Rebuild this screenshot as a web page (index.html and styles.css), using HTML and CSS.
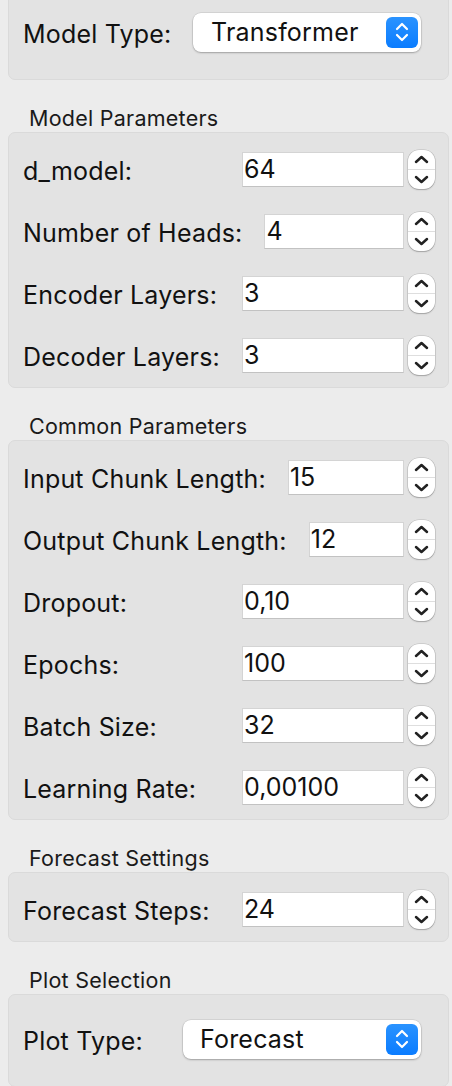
FILE: index.html
```html
<!DOCTYPE html>
<html>
<head>
<meta charset="utf-8">
<link rel="stylesheet" href="styles.css">
</head>
<body>
<div class="panel">
  <div class="group group-combo group-first">
    <div class="row">
      <span class="label label-model">Model Type:</span>
      <div class="combo"><span class="combo-text combo-text-model">Transformer</span><span class="combo-btn"><svg width="16" height="22" viewBox="0 0 16 22"><path d="M3 8 L8 3 L13 8 M3 14 L8 19 L13 14" fill="none" stroke="#fff" stroke-width="2.2" stroke-linecap="round" stroke-linejoin="round"/></svg></span></div>
    </div>
  </div>

  <div class="title">Model Parameters</div>
  <div class="group">
    <div class="row"><span class="label">d_model:</span><div class="field">64</div><div class="spin"><svg class="chev" width="27" height="39" viewBox="0 0 27 39"><path d="M8 12 L13.5 7 L19 12 M8 27 L13.5 32 L19 27" fill="none" stroke="#222" stroke-width="2.5" stroke-linecap="round" stroke-linejoin="round"/><line x1="0" y1="19.5" x2="27" y2="19.5" stroke="#dedede" stroke-width="1"/></svg></div></div>
    <div class="row"><span class="label">Number of Heads:</span><div class="field">4</div><div class="spin"><svg class="chev" width="27" height="39" viewBox="0 0 27 39"><path d="M8 12 L13.5 7 L19 12 M8 27 L13.5 32 L19 27" fill="none" stroke="#222" stroke-width="2.5" stroke-linecap="round" stroke-linejoin="round"/><line x1="0" y1="19.5" x2="27" y2="19.5" stroke="#dedede" stroke-width="1"/></svg></div></div>
    <div class="row"><span class="label">Encoder Layers:</span><div class="field">3</div><div class="spin"><svg class="chev" width="27" height="39" viewBox="0 0 27 39"><path d="M8 12 L13.5 7 L19 12 M8 27 L13.5 32 L19 27" fill="none" stroke="#222" stroke-width="2.5" stroke-linecap="round" stroke-linejoin="round"/><line x1="0" y1="19.5" x2="27" y2="19.5" stroke="#dedede" stroke-width="1"/></svg></div></div>
    <div class="row"><span class="label">Decoder Layers:</span><div class="field">3</div><div class="spin"><svg class="chev" width="27" height="39" viewBox="0 0 27 39"><path d="M8 12 L13.5 7 L19 12 M8 27 L13.5 32 L19 27" fill="none" stroke="#222" stroke-width="2.5" stroke-linecap="round" stroke-linejoin="round"/><line x1="0" y1="19.5" x2="27" y2="19.5" stroke="#dedede" stroke-width="1"/></svg></div></div>
  </div>

  <div class="title">Common Parameters</div>
  <div class="group">
    <div class="row"><span class="label">Input Chunk Length:</span><div class="field">15</div><div class="spin"><svg class="chev" width="27" height="39" viewBox="0 0 27 39"><path d="M8 12 L13.5 7 L19 12 M8 27 L13.5 32 L19 27" fill="none" stroke="#222" stroke-width="2.5" stroke-linecap="round" stroke-linejoin="round"/><line x1="0" y1="19.5" x2="27" y2="19.5" stroke="#dedede" stroke-width="1"/></svg></div></div>
    <div class="row"><span class="label">Output Chunk Length:</span><div class="field">12</div><div class="spin"><svg class="chev" width="27" height="39" viewBox="0 0 27 39"><path d="M8 12 L13.5 7 L19 12 M8 27 L13.5 32 L19 27" fill="none" stroke="#222" stroke-width="2.5" stroke-linecap="round" stroke-linejoin="round"/><line x1="0" y1="19.5" x2="27" y2="19.5" stroke="#dedede" stroke-width="1"/></svg></div></div>
    <div class="row"><span class="label">Dropout:</span><div class="field">0,10</div><div class="spin"><svg class="chev" width="27" height="39" viewBox="0 0 27 39"><path d="M8 12 L13.5 7 L19 12 M8 27 L13.5 32 L19 27" fill="none" stroke="#222" stroke-width="2.5" stroke-linecap="round" stroke-linejoin="round"/><line x1="0" y1="19.5" x2="27" y2="19.5" stroke="#dedede" stroke-width="1"/></svg></div></div>
    <div class="row"><span class="label">Epochs:</span><div class="field">100</div><div class="spin"><svg class="chev" width="27" height="39" viewBox="0 0 27 39"><path d="M8 12 L13.5 7 L19 12 M8 27 L13.5 32 L19 27" fill="none" stroke="#222" stroke-width="2.5" stroke-linecap="round" stroke-linejoin="round"/><line x1="0" y1="19.5" x2="27" y2="19.5" stroke="#dedede" stroke-width="1"/></svg></div></div>
    <div class="row"><span class="label">Batch Size:</span><div class="field">32</div><div class="spin"><svg class="chev" width="27" height="39" viewBox="0 0 27 39"><path d="M8 12 L13.5 7 L19 12 M8 27 L13.5 32 L19 27" fill="none" stroke="#222" stroke-width="2.5" stroke-linecap="round" stroke-linejoin="round"/><line x1="0" y1="19.5" x2="27" y2="19.5" stroke="#dedede" stroke-width="1"/></svg></div></div>
    <div class="row"><span class="label">Learning Rate:</span><div class="field">0,00100</div><div class="spin"><svg class="chev" width="27" height="39" viewBox="0 0 27 39"><path d="M8 12 L13.5 7 L19 12 M8 27 L13.5 32 L19 27" fill="none" stroke="#222" stroke-width="2.5" stroke-linecap="round" stroke-linejoin="round"/><line x1="0" y1="19.5" x2="27" y2="19.5" stroke="#dedede" stroke-width="1"/></svg></div></div>
  </div>

  <div class="title">Forecast Settings</div>
  <div class="group">
    <div class="row"><span class="label">Forecast Steps:</span><div class="field">24</div><div class="spin"><svg class="chev" width="27" height="39" viewBox="0 0 27 39"><path d="M8 12 L13.5 7 L19 12 M8 27 L13.5 32 L19 27" fill="none" stroke="#222" stroke-width="2.5" stroke-linecap="round" stroke-linejoin="round"/><line x1="0" y1="19.5" x2="27" y2="19.5" stroke="#dedede" stroke-width="1"/></svg></div></div>
  </div>

  <div class="title">Plot Selection</div>
  <div class="group group-combo">
    <div class="row">
      <span class="label label-plot">Plot Type:</span>
      <div class="combo"><span class="combo-text combo-text-plot">Forecast</span><span class="combo-btn"><svg width="16" height="22" viewBox="0 0 16 22"><path d="M3 8 L8 3 L13 8 M3 14 L8 19 L13 14" fill="none" stroke="#fff" stroke-width="2.2" stroke-linecap="round" stroke-linejoin="round"/></svg></span></div>
    </div>
  </div>
</div>
</body>
</html>
```

FILE: styles.css
```css
html, body {
  margin: 0;
  padding: 0;
  background: #ececec;
  overflow: hidden;
}
body {
  font-family: Inter, "Noto Sans", "Liberation Sans", sans-serif;
  color: #111;
}
.panel {
  width: 441px;
  padding-left: 8px;
}
.group {
  background: #e3e3e3;
  border: 1px solid #dadada;
  border-radius: 7px;
  padding: 14px 13px 10px 14px;
  display: flex;
  flex-direction: column;
  gap: 18px;
}
.group-combo {
  padding: 22px 27px 25px 14px;
}
.group-first {
  margin-top: -13px;
}
.title {
  font-size: 21.5px;
  letter-spacing: 0.25px;
  line-height: 25px;
  padding: 26px 0 1px 21px;
  color: #1a1a1a;
}
.row {
  height: 44px;
  display: flex;
  align-items: center;
}
.label {
  font-size: 25px;
  letter-spacing: 0.2px;
  min-width: 197px;
  margin-right: 22px;
  padding-top: 3px;
  white-space: nowrap;
  flex: 0 0 auto;
}
.label-model { min-width: 170px; width: 170px; margin-right: 0; }
.label-plot { min-width: 160px; width: 160px; margin-right: 0; }
.field {
  flex: 1 1 auto;
  height: 35px;
  box-sizing: border-box;
  background: #fff;
  border: 1px solid #d4d4d4;
  border-bottom-color: #c2c2c2;
  font-size: 25px;
  line-height: 33px;
  padding-left: 1px;
}
.spin {
  flex: 0 0 27px;
  width: 27px;
  height: 39px;
  margin-left: 4px;
  background: #fff;
  border-radius: 11px;
  box-shadow: 0 0 0 0.5px rgba(0,0,0,0.18), 0 1px 1.5px rgba(0,0,0,0.22);
  overflow: hidden;
}
.chev { display: block; }
.combo {
  flex: 1 1 auto;
  height: 39px;
  background: #fff;
  border-radius: 8px;
  box-shadow: 0 0 0 0.5px rgba(0,0,0,0.12), 0 1px 2px rgba(0,0,0,0.25);
  display: flex;
  align-items: center;
  justify-content: space-between;
  padding-right: 3px;
}
.combo-text {
  font-size: 25px;
  letter-spacing: 0.2px;
  padding-left: 18px;
}
.combo-text-plot { padding-left: 17px; }
.combo-btn {
  width: 32px;
  height: 31px;
  border-radius: 6px;
  background: linear-gradient(#2a93ff, #0a7cff);
  display: flex;
  align-items: center;
  justify-content: center;
}
.combo-btn svg { display: block; }
```
